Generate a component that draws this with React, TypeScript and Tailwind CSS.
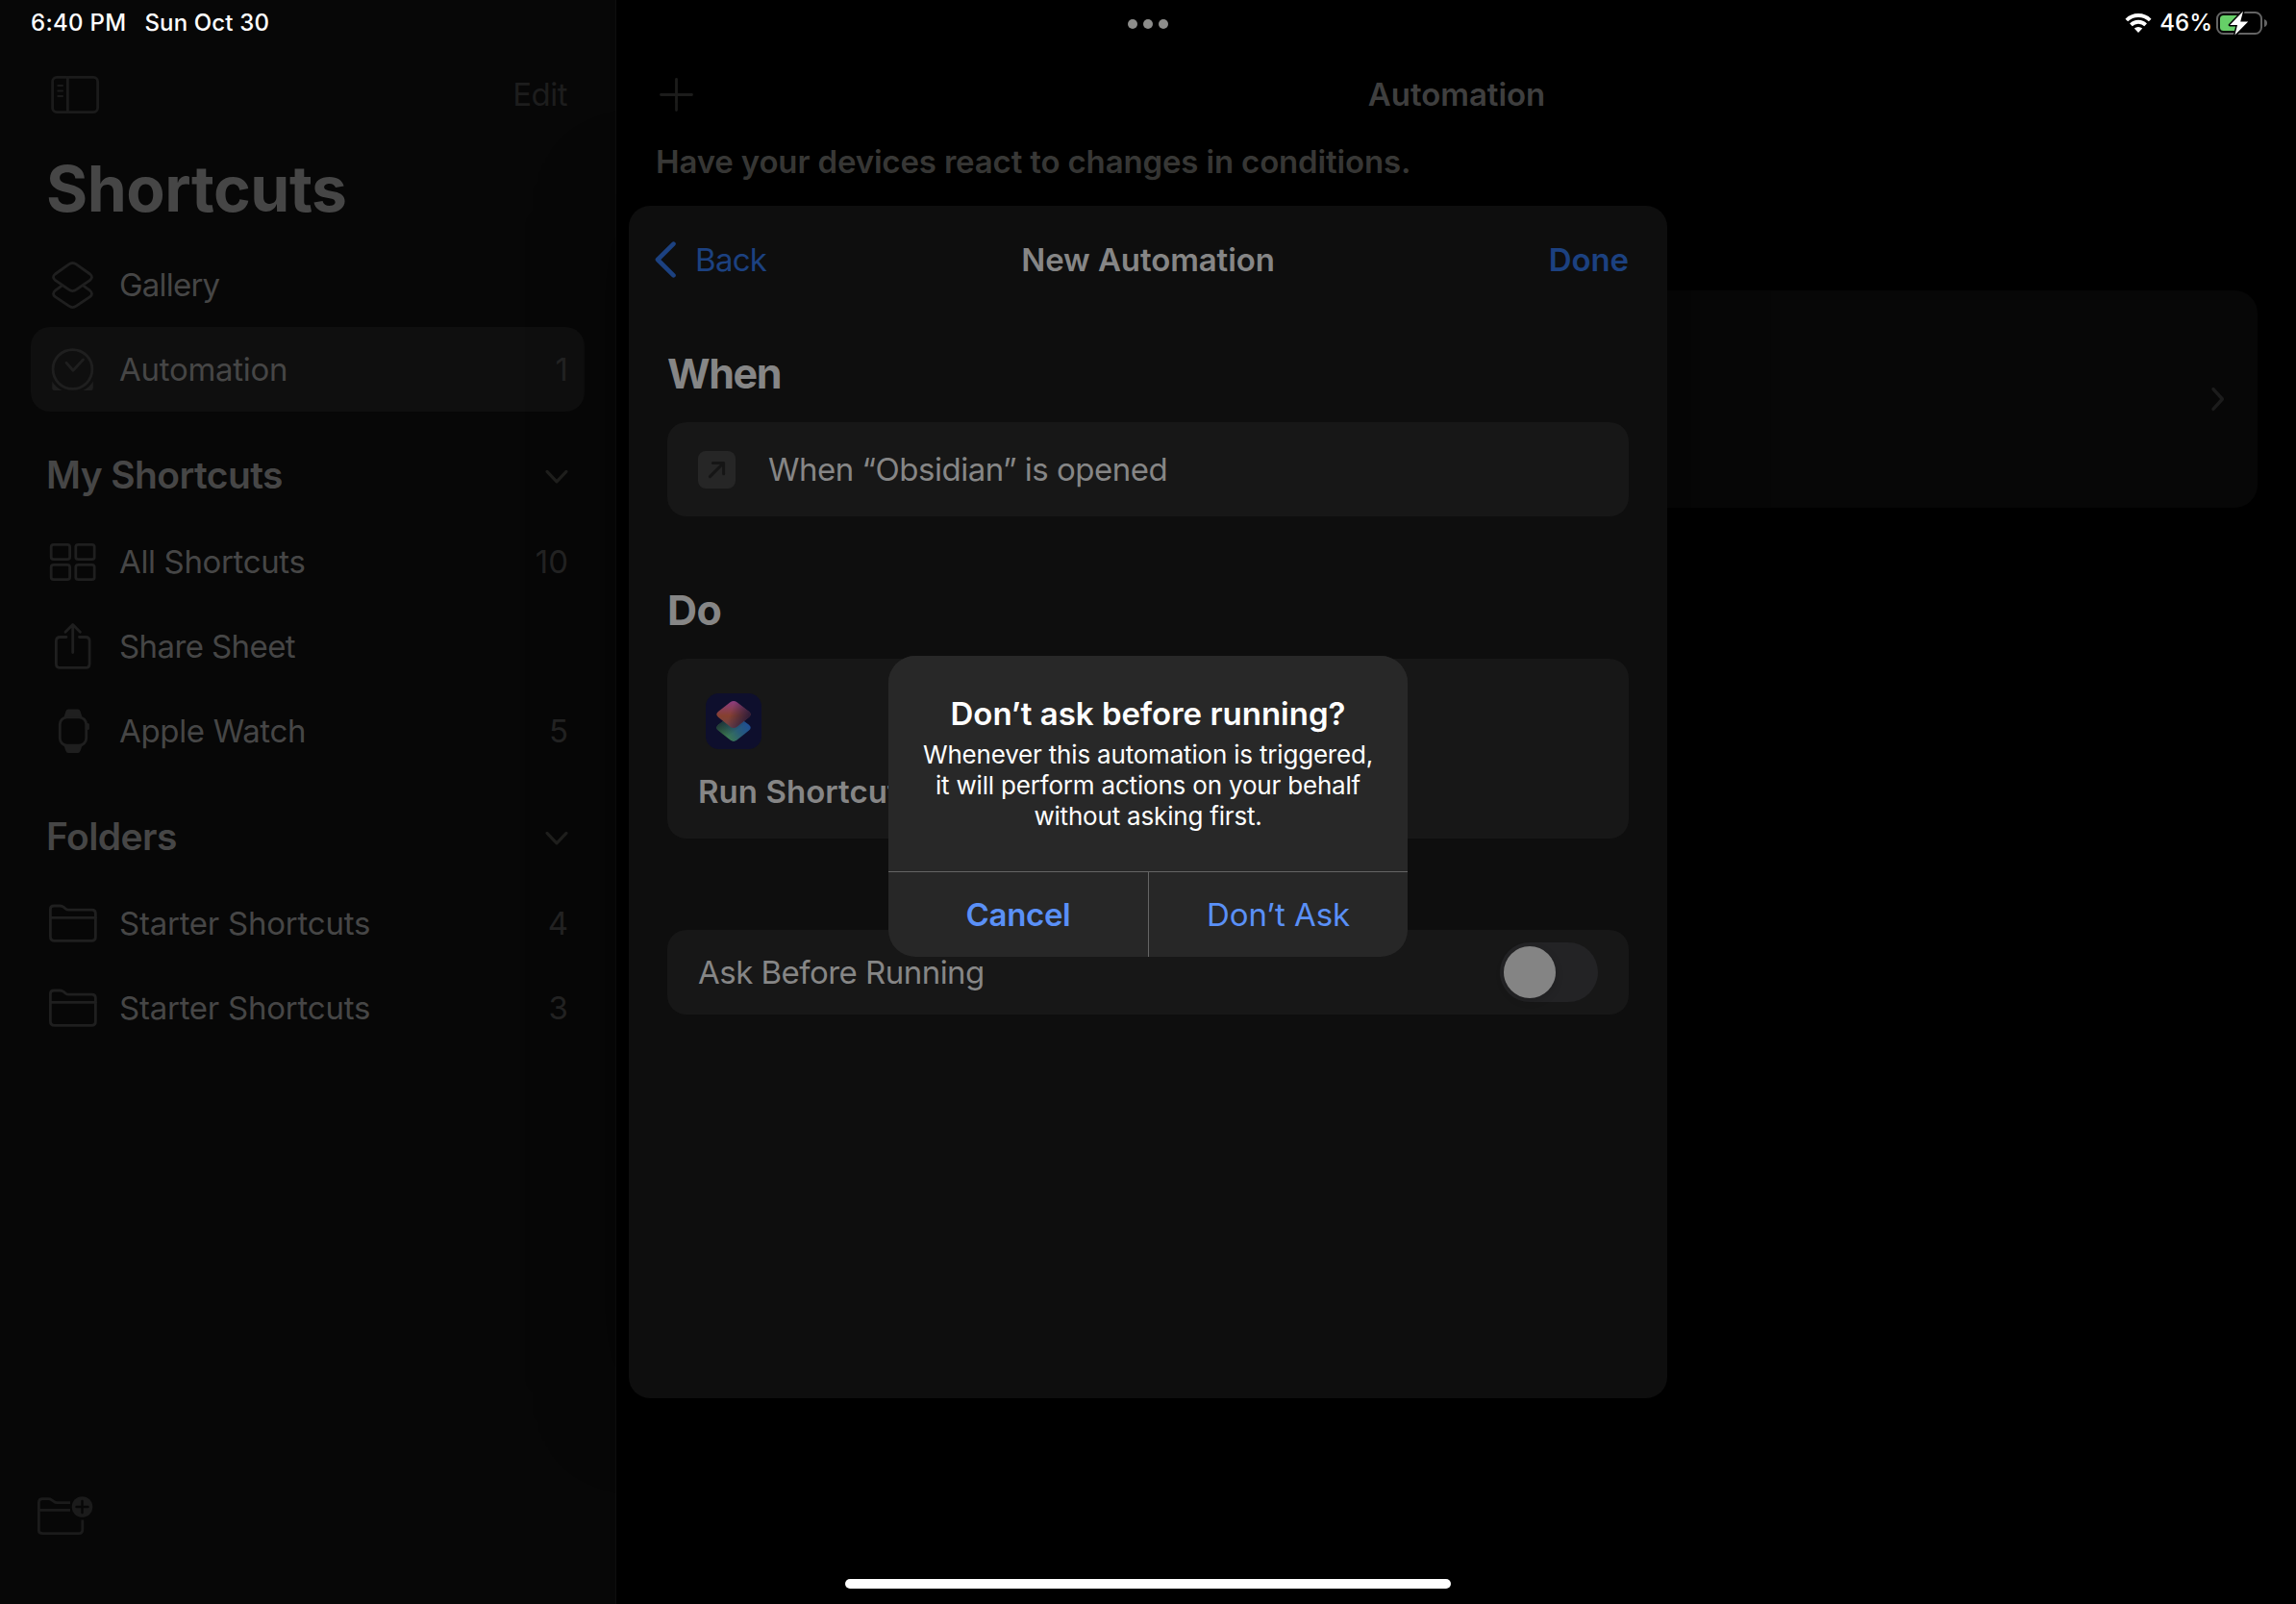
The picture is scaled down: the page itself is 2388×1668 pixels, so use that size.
import React from "react";

type IconProps = { children: React.ReactNode };

const SidebarIcon = ({ children }: IconProps) => (
  <svg
    className="h-14 w-14 shrink-0 text-[#1f1f1f]"
    viewBox="0 0 56 56"
    fill="none"
    stroke="currentColor"
    strokeWidth="2.8"
    strokeLinecap="round"
    strokeLinejoin="round"
  >
    {children}
  </svg>
);

const GalleryIcon = () => (
  <SidebarIcon>
    <path d="M23.6 6.9Q27.5 4.2 31.4 6.9L45.6 17Q49.4 20.2 45.6 23.4L31.4 33.2Q27.5 36 23.6 33.2L9.4 23.4Q5.6 20.2 9.4 17Z" />
    <path d="M16 29.3L9.4 34.2Q5.6 37.4 9.4 40.6L23.6 50.2Q27.5 53 31.4 50.2L45.6 40.6Q49.4 37.4 45.6 34.2L39 29.3" />
  </SidebarIcon>
);

const ClockIcon = () => (
  <SidebarIcon>
    <circle cx="27.5" cy="28" r="20.4" />
    <path d="M21 21.3L28 29.2L38.5 18" />
    <path
      d="M6.2 40.5Q9.5 46.5 16.5 50H8.5Q6.2 50 6.2 47.5ZM48.8 40.5Q45.5 46.5 38.5 50H46.5Q48.8 50 48.8 47.5Z"
      fill="currentColor"
      stroke="none"
    />
  </SidebarIcon>
);

const GridIcon = () => (
  <SidebarIcon>
    <rect x="5.2" y="10.3" width="19.4" height="15.4" rx="2.4" />
    <rect x="30.8" y="10.3" width="19.4" height="15.4" rx="2.4" />
    <rect x="5.2" y="31.3" width="19.4" height="15.4" rx="2.4" />
    <rect x="30.8" y="31.3" width="19.4" height="15.4" rx="2.4" />
  </SidebarIcon>
);

const ShareIcon = () => (
  <SidebarIcon>
    <path d="M21 18.5H14.5Q10.4 18.5 10.4 22.6V46.2Q10.4 50.4 14.5 50.4H41Q45.1 50.4 45.1 46.2V22.6Q45.1 18.5 41 18.5H34.5" />
    <path d="M27.7 5.8V34.5M20 13.2L27.7 5.6L35.4 13.2" />
  </SidebarIcon>
);

const WatchIcon = () => (
  <SidebarIcon>
    <rect x="14.3" y="13.8" width="27.4" height="29.4" rx="7.5" />
    <path
      d="M18.5 13.5L20.5 7.5Q21.2 5.6 23 5.6H33Q34.8 5.6 35.5 7.5L37.5 13.5ZM18.5 43.5L20.5 49Q21.2 51 23 51H33Q34.8 51 35.5 49L37.5 43.5Z"
      fill="currentColor"
      stroke="none"
    />
    <path d="M43.4 21.5V25.5" strokeWidth="3" />
  </SidebarIcon>
);

const FolderIcon = () => (
  <SidebarIcon>
    <path d="M4.4 42V13.6Q4.4 10 8 10H14.5Q16.6 10 18 11.2L20.2 13Q21.6 14.2 23.8 14.2H47.4Q51.4 14.2 51.4 18.2V42Q51.4 46.4 47 46.4H8.8Q4.4 46.4 4.4 42Z" />
    <path d="M4.4 22.4H51.4" />
  </SidebarIcon>
);

const ChevronDown = () => (
  <svg
    className="mt-1 h-5 w-7"
    viewBox="0 0 28 20"
    fill="none"
    stroke="#1f1f1d"
    strokeWidth="3.2"
    strokeLinecap="round"
    strokeLinejoin="round"
  >
    <path d="M4 4.4L14 14.8L24 4.4" />
  </svg>
);

type RowProps = {
  icon: React.ReactNode;
  label: string;
  count?: number;
  active?: boolean;
  tracking: string;
};

const Row = ({ icon, label, count, active, tracking }: RowProps) => (
  <li
    className={`flex h-[88px] items-center rounded-[20px] pl-4 pr-[17px] text-[33px] leading-[50px] ${active ? "bg-[#0f0f0f]" : ""}`}
  >
    {icon}
    <span className={`ml-5 text-[#464646] ${tracking}`}>{label}</span>
    {count !== undefined && <span className="ml-auto text-[#232323]">{count}</span>}
  </li>
);

const SectionHeader = ({ title }: { title: string }) => (
  <div className="flex h-28 items-center justify-between pl-4 pr-[15px] pt-5">
    <h2 className="text-[39px] font-semibold tracking-[-0.6px] text-[#464646]">{title}</h2>
    <ChevronDown />
  </div>
);

const Sidebar = () => (
  <aside className="flex h-full w-[641px] shrink-0 flex-col border-r border-[#0e0e0e] bg-[#070707] pt-14">
    <div className="flex h-[84px] items-center justify-between pl-[50px] pr-[50px]">
      <svg
        className="h-11 w-14"
        viewBox="0 0 56 44"
        fill="none"
        stroke="#1b1b1b"
        strokeWidth="2.8"
        strokeLinecap="round"
      >
        <rect x="4.6" y="4.4" width="47" height="36.2" rx="4.4" />
        <path d="M20.4 4.4V40" />
        <path d="M10.4 13H15M10.4 18.5H15M10.4 24H15" strokeWidth="2.2" />
      </svg>
      <span className="text-[33px] leading-[50px] tracking-[-0.5px] text-[#1d1d1d]">Edit</span>
    </div>
    <h1 className="flex h-28 items-center pl-12 text-[66px] font-bold tracking-[-0.5px] text-[#464646]">
      Shortcuts
    </h1>
    <nav className="px-8">
      <ul>
        <Row icon={<GalleryIcon />} label="Gallery" tracking="tracking-[-0.8px]" />
        <Row icon={<ClockIcon />} label="Automation" count={1} active tracking="tracking-[-0.28px]" />
      </ul>
      <SectionHeader title="My Shortcuts" />
      <ul>
        <Row icon={<GridIcon />} label="All Shortcuts" count={10} tracking="tracking-[-0.36px]" />
        <Row icon={<ShareIcon />} label="Share Sheet" tracking="tracking-[-0.6px]" />
        <Row icon={<WatchIcon />} label="Apple Watch" count={5} tracking="tracking-[-0.34px]" />
      </ul>
      <SectionHeader title="Folders" />
      <ul>
        <Row icon={<FolderIcon />} label="Starter Shortcuts" count={4} tracking="tracking-[-0.24px]" />
        <Row icon={<FolderIcon />} label="Starter Shortcuts" count={3} tracking="tracking-[-0.24px]" />
      </ul>
    </nav>
    <div className="mt-auto pb-[67px] pl-9">
      <svg
        className="h-[50px] w-[64px]"
        viewBox="0 0 64 50"
        fill="none"
        stroke="#1b1b1b"
        strokeWidth="2.8"
        strokeLinejoin="round"
      >
        <path d="M37 11.6H23.4Q21.4 11.6 20 10.4L17.8 8.8Q16.2 7.6 14.2 7.6H8.4Q4.4 7.6 4.4 11.6V40.4Q4.4 43.6 8.6 43.6H45.8Q49.8 43.6 49.8 39.4V29.6" />
        <path d="M4.4 19.4H37" />
        <circle cx="49.5" cy="16" r="10.8" fill="#1b1b1b" stroke="none" />
        <path d="M49.5 10V22M43.5 16H55.5" stroke="#070707" strokeWidth="2.4" strokeLinecap="round" />
      </svg>
    </div>
  </aside>
);

const Main = () => (
  <main className="flex h-full flex-1 flex-col bg-black pt-14">
    <div className="grid h-[84px] grid-cols-[1fr_auto_1fr] items-center px-10">
      <svg
        className="h-11 w-11"
        viewBox="0 0 44 44"
        stroke="#1c1c1b"
        strokeWidth="2.8"
        strokeLinecap="round"
      >
        <path d="M22.5 6.5V38.5M6.5 22.5H38.5" />
      </svg>
      <h2 className="pl-px text-[33px] font-semibold leading-[50px] tracking-[-0.04px] text-[#3f3f3f]">
        Automation
      </h2>
    </div>
    <p className="flex h-14 items-center pl-[41px] text-[33px] font-semibold leading-[50px] tracking-[-0.16px] text-[#3c3c3a]">
      Have your devices react to changes in conditions.
    </p>
    <div className="mx-10 mt-[106px] flex h-[226px] items-center justify-end rounded-[24px] bg-[#070707] pr-[30px]">
      <svg
        className="h-8 w-5"
        viewBox="0 0 20 32"
        fill="none"
        stroke="#1c1c1c"
        strokeWidth="3.4"
        strokeLinecap="round"
        strokeLinejoin="round"
      >
        <path d="M4 5.6L13.4 16L4 26.4" />
      </svg>
    </div>
  </main>
);

const StatusBar = () => (
  <header className="absolute inset-x-0 top-0 grid h-[47px] grid-cols-3 items-center text-2xl font-medium leading-[29px] text-white">
    <div className="flex gap-[19px] pl-8">
      <span className="tracking-[0.3px]">6:40 PM</span>
      <span className="tracking-[0.15px]">Sun Oct 30</span>
    </div>
    <div className="flex justify-center gap-1.5 pt-[3px]">
      <i className="h-2.5 w-2.5 rounded-full bg-[#8d8d8b]" />
      <i className="h-2.5 w-2.5 rounded-full bg-[#8d8d8b]" />
      <i className="h-2.5 w-2.5 rounded-full bg-[#8d8d8b]" />
    </div>
    <div className="flex items-center justify-end pr-7">
      <svg className="mt-px h-6 w-8" viewBox="0 0 32 24" fill="none" stroke="#fff" strokeWidth="3.8">
        <path d="M3.8 9A17.4 17.4 0 0 1 28.2 9" />
        <path d="M8.4 13.9A10.8 10.8 0 0 1 23.6 13.9" />
        <path d="M16 22L11.8 17.6A6.2 6.2 0 0 1 20.2 17.6Z" fill="#fff" stroke="none" />
      </svg>
      <span className="ml-[6px]">46%</span>
      <svg className="ml-[3px] mt-px h-7 w-[56px]" viewBox="0 0 56 28">
        <rect x="2" y="3" width="46" height="22" rx="6.4" fill="none" stroke="#646464" strokeWidth="2" />
        <path d="M51 10Q54 11 54 14Q54 17 51 18Z" fill="#646464" />
        <path d="M8.5 6H23V22H8.5Q5 22 5 18.5V9.5Q5 6 8.5 6Z" fill="#66cf68" />
        <path
          d="M29 1.8L15.2 16H23L20.4 26.6L34.2 12.4H26.2Z"
          fill="#fff"
          stroke="#000"
          strokeWidth="3"
          strokeLinejoin="round"
          paintOrder="stroke"
        />
      </svg>
    </div>
  </header>
);

const upperDiamond =
  "M25.8 9.1Q29 6.8 32.2 9.1L45 18.9Q48.4 21.8 45 24.7L32.2 34.9Q29 37.2 25.8 34.9L13 24.7Q9.6 21.8 13 18.9Z";
const lowerDiamond =
  "M25.8 23.2Q29 20.9 32.2 23.2L45 32.8Q48.4 35.7 45 38.6L32.2 48.8Q29 51.1 25.8 48.8L13 38.6Q9.6 35.7 13 32.8Z";

const AppTile = () => (
  <svg className="ml-10 h-[58px] w-[58px]" viewBox="0 0 58 58">
    <defs>
      <linearGradient id="upper" x1="0" y1="0" x2="0" y2="1">
        <stop offset="0" stopColor="#8d3c80" />
        <stop offset="0.55" stopColor="#86402f" />
        <stop offset="1" stopColor="#70434a" />
      </linearGradient>
      <linearGradient id="upperEdge" gradientUnits="userSpaceOnUse" x1="26" y1="19" x2="45" y2="26">
        <stop offset="0" stopColor="#1f163a" stopOpacity="0" />
        <stop offset="1" stopColor="#1f163a" stopOpacity="0.85" />
      </linearGradient>
      <linearGradient id="lower" gradientUnits="userSpaceOnUse" x1="45" y1="30" x2="22" y2="46">
        <stop offset="0" stopColor="#1d4d98" />
        <stop offset="0.5" stopColor="#285b78" />
        <stop offset="1" stopColor="#3c7a50" />
      </linearGradient>
      <linearGradient id="lowerEdge" gradientUnits="userSpaceOnUse" x1="14" y1="29" x2="25" y2="44">
        <stop offset="0" stopColor="#15212c" stopOpacity="0.85" />
        <stop offset="1" stopColor="#15212c" stopOpacity="0" />
      </linearGradient>
    </defs>
    <rect width="58" height="58" rx="13.5" fill="#0e0f2d" />
    <path d={lowerDiamond} fill="url(#lower)" />
    <path d={lowerDiamond} fill="url(#lowerEdge)" />
    <path d={upperDiamond} fill="url(#upper)" />
    <path d={upperDiamond} fill="url(#upperEdge)" />
  </svg>
);

const Sheet = () => (
  <section className="h-[1240px] w-[1080px] rounded-[22px] bg-[#0e0e0e] shadow-[0_0_90px_rgba(3,4,0,0.5)]">
    <div className="grid h-28 grid-cols-[1fr_auto_1fr] items-center px-10 text-[33px] leading-[50px]">
      <button className="-ml-4 flex items-center text-left text-[#1c4180]">
        <svg
          className="h-12 w-7"
          viewBox="0 0 28 48"
          fill="none"
          stroke="currentColor"
          strokeWidth="4.6"
          strokeLinecap="round"
          strokeLinejoin="round"
        >
          <path d="M22.5 7.6L6 24L22.5 40.4" />
        </svg>
        <span className="ml-[17px] tracking-[-0.7px]">Back</span>
      </button>
      <h2 className="font-semibold tracking-[-0.1px] text-[#868686]">New Automation</h2>
      <button className="text-right font-semibold tracking-[-0.1px] text-[#1c4180]">Done</button>
    </div>
    <div className="px-10">
      <h3 className="flex h-[113px] items-center pt-3 text-[43px] font-bold tracking-[-1.4px] text-[#868686]">
        When
      </h3>
      <div className="flex h-[98px] items-center rounded-[20px] bg-[#171717] pl-8">
        <svg className="h-[39px] w-[39px]" viewBox="0 0 39 39">
          <rect width="39" height="39" rx="8" fill="#262626" />
          <path
            d="M12.4 26.6L26 13M15.4 12.4H26.6V23.8"
            fill="none"
            stroke="#151515"
            strokeWidth="3"
            strokeLinecap="round"
            strokeLinejoin="round"
          />
        </svg>
        <span className="ml-[34px] text-[33px] leading-[50px] tracking-[-0.5px] text-[#868686]">
          When “Obsidian” is opened
        </span>
      </div>
      <h3 className="flex h-[148px] items-center pt-[47px] text-[43px] font-bold tracking-[-0.6px] text-[#868686]">
        Do
      </h3>
      <div className="h-[187px] rounded-[20px] bg-[#171717] pt-9">
        <AppTile />
        <p className="ml-8 mt-5 text-[33px] font-semibold leading-[48px] tracking-[0.05px] text-[#868686]">
          Run Shortcut
        </p>
      </div>
      <div className="mt-[95px] flex h-[88px] items-center justify-between rounded-[20px] bg-[#171717] pl-8 pr-8">
        <span className="text-[33px] leading-[50px] tracking-[-0.53px] text-[#868686]">
          Ask Before Running
        </span>
        <span className="flex h-[62px] w-[102px] items-center rounded-full bg-[#232325] pl-1">
          <i className="h-[54px] w-[54px] rounded-full bg-[#848484] shadow-[0_3px_8px_rgba(0,0,0,0.15)]" />
        </span>
      </div>
    </div>
  </section>
);

const Alert = () => (
  <section className="flex h-[313px] w-[540px] flex-col overflow-hidden rounded-[28px] bg-[#272727] text-white">
    <div className="h-56 bg-[#282828] pt-9 text-center">
      <h2 className="text-[33px] font-semibold leading-[48px]">Don’t ask before running?</h2>
      <p className="mt-[3px] text-[26px] leading-8 tracking-[-0.19px]">
        Whenever this automation is triggered,
        <br />
        it will perform actions on your behalf
        <br />
        without asking first.
      </p>
    </div>
    <div className="flex flex-1 border-t border-[#646464] text-[33px] leading-[50px] text-[#5a90f7]">
      <button className="w-[270px] font-semibold tracking-[-0.34px]">Cancel</button>
      <button className="flex-1 border-l border-[#646464] tracking-[-0.1px]">Don’t Ask</button>
    </div>
  </section>
);

export default function App() {
  return (
    <div className="relative flex h-[1668px] w-[2388px] overflow-hidden bg-black font-['Inter',sans-serif]">
      <Sidebar />
      <Main />
      <div className="absolute inset-0 flex items-center justify-center">
        <Sheet />
      </div>
      <div className="absolute inset-0 flex items-center justify-center pt-[9px]">
        <Alert />
      </div>
      <StatusBar />
      <div className="absolute inset-x-0 bottom-4 flex justify-center">
        <i className="h-2.5 w-[630px] rounded-full bg-white" />
      </div>
    </div>
  );
}
